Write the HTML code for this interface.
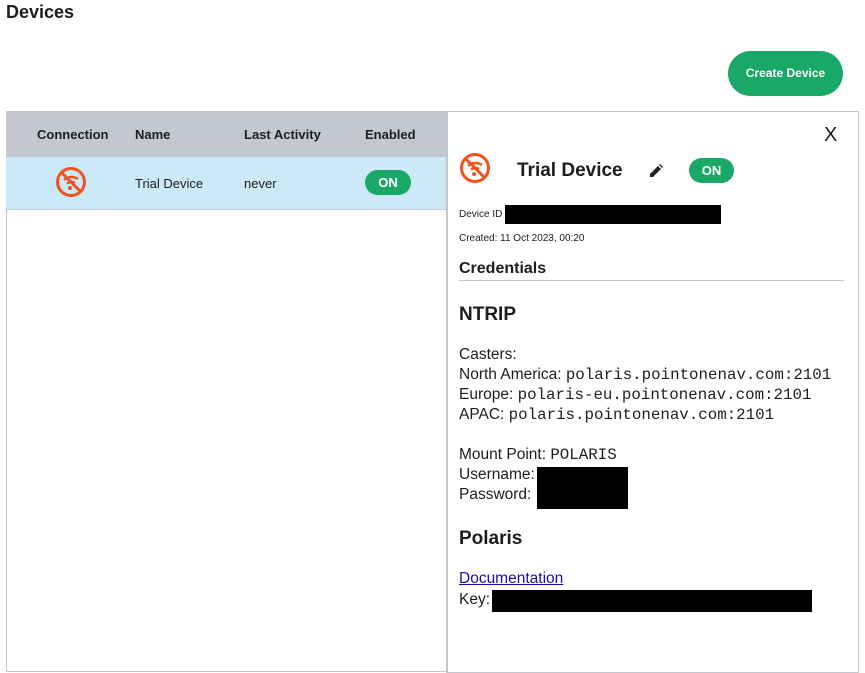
<!DOCTYPE html>
<html><head><style>
body{margin:0;width:865px;height:621px;overflow:hidden;background:#fff;font-family:"Liberation Sans",sans-serif;color:#1d1d1f;position:relative}
.a{position:absolute;white-space:nowrap}
.m{font-family:"Liberation Mono",monospace;font-size:15.8px}
.on{position:absolute;background:#1aa866;color:#fff;font-weight:bold;font-size:13px;border-radius:13px;text-align:center;line-height:25px;width:46px;height:25px}
.blk{position:absolute;background:#000}
.t{font-size:15.5px}
</style></head><body>
<div class="a" style="left:6px;top:2px;font-size:18px;font-weight:bold">Devices</div>
<div class="a" style="left:728px;top:51px;width:115px;height:45px;border-radius:23px;background:#1aa866;color:#fff;font-size:12px;font-weight:bold;text-align:center;line-height:45px">Create Device</div>
<div class="a" style="left:6px;top:111px;width:440px;height:560px;border:1px solid #c4c8ce;border-top:none"></div>
<div class="a" style="left:6px;top:111px;width:440px;height:46px;background:#c4c8ce"></div>
<div class="a" style="left:6px;top:157px;width:440px;height:52px;background:#cbe9f6;border-bottom:1px solid #b8c8d4"></div>
<div class="a" style="left:37px;top:127px;font-size:13px;font-weight:bold">Connection</div>
<div class="a" style="left:135px;top:127px;font-size:13px;font-weight:bold">Name</div>
<div class="a" style="left:244px;top:127px;font-size:13px;font-weight:bold">Last Activity</div>
<div class="a" style="left:365px;top:127px;font-size:13px;font-weight:bold">Enabled</div>
<svg class="a" style="left:55px;top:166px" width="32" height="32" viewBox="0 0 32 32"><circle cx="16" cy="16" r="13.5" fill="none" stroke="#f4511e" stroke-width="3"/><line x1="7" y1="7" x2="25" y2="25" stroke="#f4511e" stroke-width="3"/><path d="M9 14 A11 11 0 0 1 23 13 M12 17.5 A7 7 0 0 1 20 17" fill="none" stroke="#f4511e" stroke-width="2.5"/><circle cx="15" cy="22" r="2" fill="#f4511e"/></svg>
<div class="a" style="left:135px;top:176px;font-size:13px">Trial Device</div>
<div class="a" style="left:244px;top:176px;font-size:13px">never</div>
<div class="on" style="left:365px;top:170px">ON</div>

<div class="a" style="left:446px;top:111px;width:411px;height:560px;border:1px solid #c4c8ce"></div>
<div class="a" style="left:824px;top:124px;font-size:20px">X</div>
<svg class="a" style="left:459px;top:152px" width="32" height="32" viewBox="0 0 32 32"><circle cx="16" cy="16" r="13.5" fill="none" stroke="#f4511e" stroke-width="3"/><line x1="7" y1="7" x2="25" y2="25" stroke="#f4511e" stroke-width="3"/><path d="M9 14 A11 11 0 0 1 23 13 M12 17.5 A7 7 0 0 1 20 17" fill="none" stroke="#f4511e" stroke-width="2.5"/><circle cx="15" cy="22" r="2" fill="#f4511e"/></svg>
<div class="a" style="left:517px;top:160px;font-size:19px;font-weight:bold">Trial Device</div>
<svg class="a" style="left:649px;top:164px" width="14" height="14" viewBox="0 0 14 14"><path d="M1 13 L1 10 L9 2 L12 5 L4 13 Z M10 1 L11 0 L14 3 L13 4 Z" fill="#222"/></svg>
<div class="on" style="left:689px;top:158px;width:45px">ON</div>
<div class="a" style="left:459px;top:209px;font-size:10px">Device ID</div>
<div class="blk" style="left:505px;top:205px;width:216px;height:19px"></div>
<div class="a" style="left:459px;top:233px;font-size:10px">Created: 11 Oct 2023, 00:20</div>
<div class="a" style="left:459px;top:260px;font-size:16px;font-weight:bold">Credentials</div>
<div class="a" style="left:459px;top:280px;width:385px;height:1px;background:#c4c8ce"></div>
<div class="a" style="left:459px;top:304px;font-size:19px;font-weight:bold">NTRIP</div>
<div class="a t" style="left:459px;top:346px">Casters:</div>
<div class="a t" style="left:459px;top:366px">North America: <span class="m">polaris.pointonenav.com:2101</span></div>
<div class="a t" style="left:459px;top:386px">Europe: <span class="m">polaris-eu.pointonenav.com:2101</span></div>
<div class="a t" style="left:459px;top:406px">APAC: <span class="m">polaris.pointonenav.com:2101</span></div>
<div class="a t" style="left:459px;top:446px">Mount Point: <span class="m">POLARIS</span></div>
<div class="a t" style="left:459px;top:466px">Username:</div>
<div class="a t" style="left:459px;top:486px">Password:</div>
<div class="blk" style="left:537px;top:467px;width:91px;height:42px"></div>
<div class="a" style="left:459px;top:528px;font-size:19px;font-weight:bold">Polaris</div>
<div class="a t" style="left:459px;top:570px;color:#1a0dab;text-decoration:underline">Documentation</div>
<div class="a t" style="left:459px;top:591px">Key:</div>
<div class="blk" style="left:492px;top:590px;width:320px;height:22px"></div>
</body></html>
